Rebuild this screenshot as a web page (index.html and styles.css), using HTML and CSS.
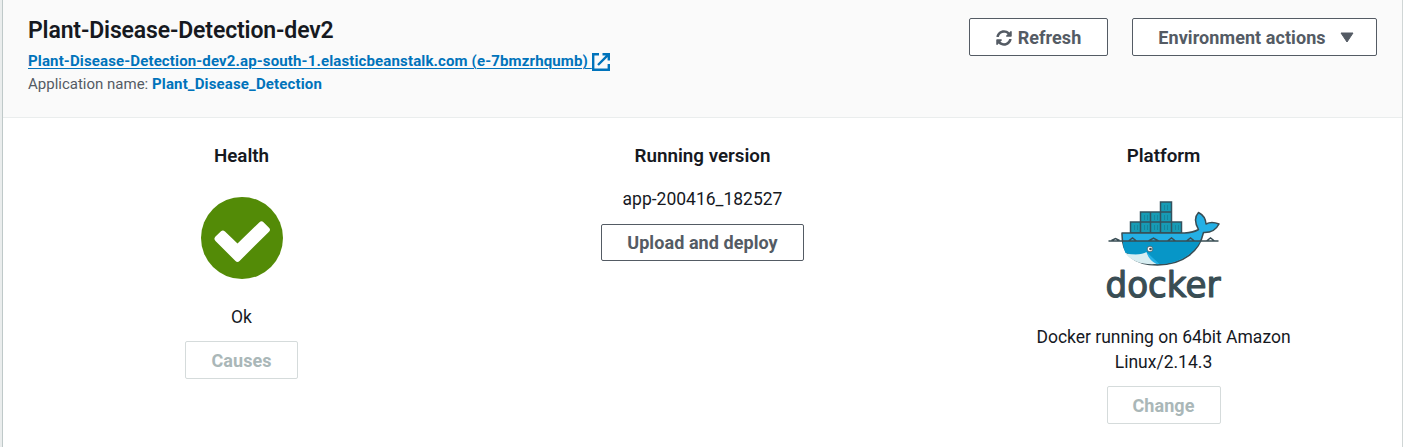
FILE: index.html
```html
<!DOCTYPE html>
<html lang="en">
<head>
<meta charset="utf-8">
<title>Plant-Disease-Detection-dev2</title>
<link rel="stylesheet" href="styles.css">
</head>
<body>
<main class="panel">
  <header class="panel-header">
    <div class="summary">
      <h1 class="title">Plant-Disease-Detection-dev2</h1>
      <div class="url-row"><a class="url" href="#"><span class="url-text">Plant-Disease-Detection-dev2.ap-south-1.elasticbeanstalk.com (e-7bmzrhqumb)&nbsp;</span><svg class="external" viewBox="0 0 18 18"><path d="M7 1.200H1.200v15.600h15.600V11M10.500 1.200h6.300v6.300M16.800 1.200L6 12"/></svg></a></div>
      <div class="app">Application name: <a class="app-link" href="#">Plant_Disease_Detection</a></div>
    </div>
    <div class="actions">
      <button class="btn refresh"><svg class="refresh-icon" viewBox="0 0 512 512"><path d="M370.700 133.300C339.500 104 298.900 88 255.800 88c-77.500.100-144.300 53.200-162.800 126.900-1.300 5.400-6.100 9.200-11.700 9.200H24.100c-7.500 0-13.200-6.800-11.800-14.200C33.900 94.900 134.800 8 256 8c66.400 0 126.800 26.100 171.300 68.700L463 41c15.100-15.100 41-4.400 41 17v134c0 13.300-10.700 24-24 24H346c-21.400 0-32.100-25.900-17-41l41.700-41.700zM32 296h134c21.400 0 32.100 25.900 17 41l-41.800 41.800c31.300 29.300 71.800 45.300 114.900 45.200 77.400-.100 144.300-53.100 162.800-126.800 1.300-5.400 6.100-9.200 11.700-9.200h57.300c7.500 0 13.200 6.800 11.800 14.200C478.100 417.100 377.200 504 256 504c-66.400 0-126.800-26.100-171.300-68.700L49 471c-15.100 15.100-41 4.400-41-17V320c0-13.300 10.700-24 24-24z"/></svg><span>Refresh</span></button>
      <button class="btn environment"><span>Environment actions</span><svg class="caret" viewBox="0 0 14 11"><path d="M1 1h12L7 10z"/></svg></button>
    </div>
  </header>
  <div class="columns">
    <section class="column">
      <h2 class="heading">Health</h2>
      <svg class="status" viewBox="0 0 82 82"><circle cx="41" cy="41" r="41"/><path d="M14.500 39.500L20 34.200Q22 32.500 24 34.500L36.500 46.500L58.500 25.200Q60.500 23.300 62.500 25.200L68 30.700Q70 32.700 68 34.700L38.500 64Q36.500 66 34.500 64L14.500 44Q12.300 41.800 14.500 39.500Z"/></svg>
      <p class="text health-text">Ok</p>
      <button class="btn causes" disabled>Causes</button>
    </section>
    <section class="column">
      <h2 class="heading">Running version</h2>
      <p class="text version">app-200416_182527</p>
      <button class="btn deploy">Upload and deploy</button>
    </section>
    <section class="column">
      <h2 class="heading">Platform</h2>
      <svg class="docker" viewBox="-20 -1 120 104">
        <g transform="translate(2.500 0)">
          <g class="boxes">
            <path d="M34 5h11v10H34zM14 15h10v10H14zM24 15h10v10H24zM34 15h11v10H34zM4 25h10v11H4zM14 25h10v11H14zM24 25h10v11H24zM34 25h11v11H34zM45 25h10v11H45z"/>
            <path class="ribs" d="M38 8v5M41 8v5M18 18v5M21 18v5M28 18v5M31 18v5M38 18v5M41 18v5M8 28v5M11 28v5M18 28v5M21 28v5M28 28v5M31 28v5M38 28v5M41 28v5M49 28v5M52 28v5"/>
          </g>
          <path class="whale" d="M-4.500 36H58Q67 35.500 72 32.500Q66 22 72 15.500Q79 19 79.500 27Q85 24 92.500 27Q88 36 77 35.500C73 54 57 68 31 68C8 68-5 58-4.500 36Z"/>
          <path class="belly" d="M-3.500 44H74C67 57 51 67 33 67L21 56Q10 59-1 56Q-4 50-3.500 44Z"/>
          <path class="jaw" d="M-1 56.500Q14 59 20 55Q22 63 30 67C15 68 5 64-1 56.500Z"/>
          <path class="water" d="M-18 44H92M-15 43.500l4-2 4 2M2 44l4-3 4 3M22 44l5-3 5 3M41 44l4-3 4 3M60 44l4-3 4 3M80 44l4-3 4 3"/>
          <circle class="eye" cx="23.500" cy="52" r="2.800"/><circle class="pupil" cx="24" cy="52" r="1.300"/>
        </g>
        <text class="wordmark" x="-18.500" y="99.500" textLength="115" lengthAdjust="spacingAndGlyphs">docker</text>
      </svg>
      <p class="text platform-text">Docker running on 64bit Amazon Linux/2.14.3</p>
      <button class="btn change" disabled>Change</button>
    </section>
  </div>
</main>
</body>
</html>
```
FILE: styles.css
```css
* { box-sizing: border-box; }
body { margin: 0; height: 447px; overflow: hidden; background: #eaeded; font-family: Roboto, sans-serif; color: #16191f; }
.panel { width: 1401px; height: 447px; margin-left: 2px; background: #fff; border-left: 1px solid #bfc9c9; border-right: 1px solid #d0d6d6; }
.panel-header { height: 118px; padding: 16px 25px 0; background: #fafafa; border-bottom: 1px solid #eaeded; display: flex; justify-content: space-between; }
.title { margin: 0; padding-top: 1px; font-size: 23px; line-height: 28px; font-weight: 600; letter-spacing: -.14px; }
.url-row { margin-top: 5px; height: 23px; }
.url { display: flex; align-items: center; color: #0073bb; font-size: 15px; line-height: 23px; font-weight: 700; letter-spacing: .14px; text-decoration: none; }
.url-text { text-decoration: underline; text-decoration-thickness: 1px; text-underline-offset: 2px; }
.external { width: 18px; height: 18px; fill: none; stroke: #0073bb; stroke-width: 2.4; }
.app { color: #545b64; font-size: 15px; line-height: 23px; }
.app-link { color: #0073bb; font-weight: 700; letter-spacing: .15px; text-decoration: none; }
.actions { display: flex; gap: 24px; padding-top: 2px; }
.btn { display: flex; align-items: center; justify-content: center; padding: 2px 0 0; height: 38px; border: 1px solid #545b64; border-radius: 2px; background: #fff; color: #545b64; font: 700 18px/24px Roboto, sans-serif; letter-spacing: .07px; white-space: nowrap; }
.btn:disabled { color: #aab7b8; border-color: #d5dbdb; }
.refresh { width: 139px; gap: 6px; }
.refresh-icon { width: 16px; height: 16px; fill: currentColor; }
.environment { width: 245px; padding-left: 3px; gap: 14px; }
.caret { width: 14px; height: 11px; margin-top: -2px; fill: currentColor; stroke: currentColor; stroke-width: 1; stroke-linejoin: round; }
.columns { display: grid; grid-template-columns: repeat(3, 461px); padding: 26px 8px 0; }
.column { display: flex; flex-direction: column; align-items: center; }
.heading { margin: 0; font-size: 18.8px; line-height: 25px; font-weight: 600; }
.text { margin: 0; padding-top: 1px; font-size: 17.5px; line-height: 25px; text-align: center; }
.status { width: 82px; height: 82px; margin-top: 28px; fill: #538b07; }
.status path { fill: #fff; }
.health-text { margin-top: 25px; }
.causes { width: 113px; margin-top: 11px; }
.version { margin-top: 17px; }
.deploy { width: 203px; height: 37px; margin-top: 12px; padding-top: 0; }
.docker { width: 120px; height: 104px; margin-top: 27px; overflow: visible; }
.boxes { fill: #169bb5; stroke: #34515e; stroke-width: 1.5; }
.ribs { stroke: #167b91; stroke-width: .7; }
.whale { fill: #24b0e5; stroke: #394d54; stroke-width: 1.5; stroke-linejoin: round; }
.belly { fill: #0796c7; }
.jaw { fill: #d8eef2; }
.water { fill: none; stroke: #394d54; stroke-width: 1.5; }
.eye { fill: #fff; stroke: #394d54; stroke-width: .7; }
.pupil { fill: #394d54; }
.wordmark { font: 36px "DejaVu Sans", sans-serif; fill: #394d54; stroke: #394d54; stroke-width: 1.2; stroke-linejoin: round; }
.platform-text { width: 280px; margin-top: 24px; }
.change { width: 114px; margin-top: 11px; }
```
